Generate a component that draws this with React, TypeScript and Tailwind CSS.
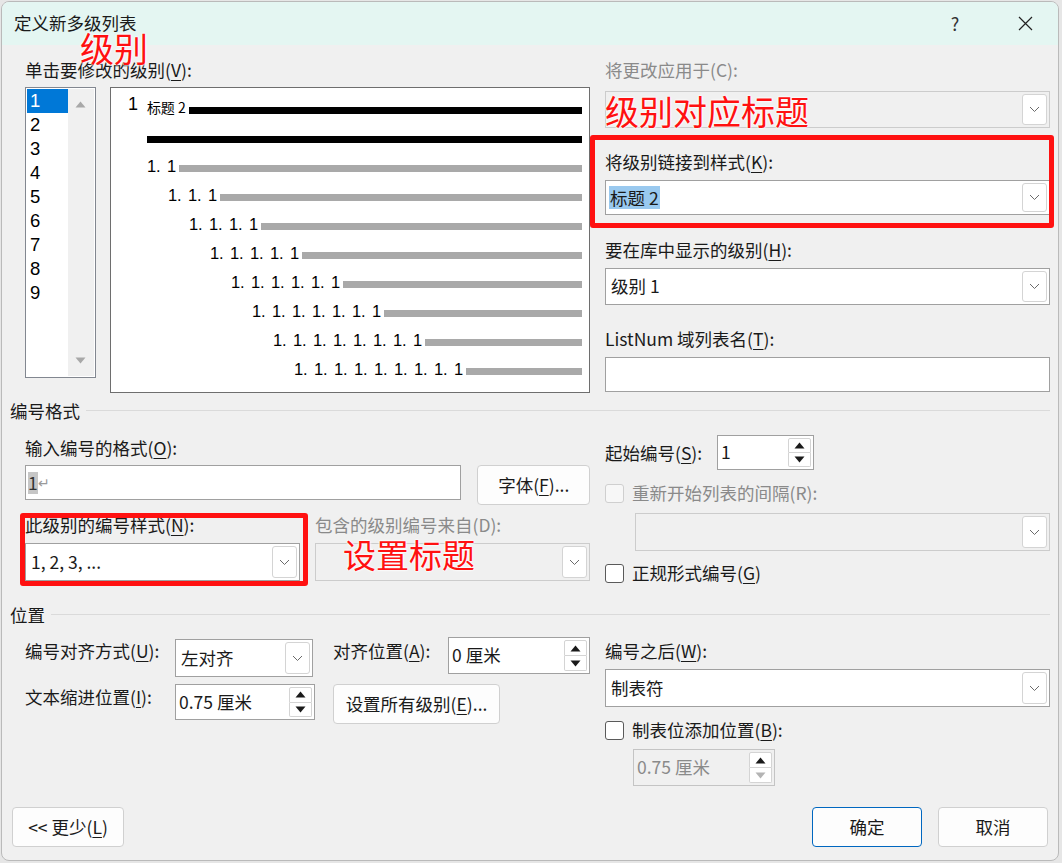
import { ReactNode } from 'react'

function Mn({ c }: { c: string }) {
  return <span className="underline decoration-1 underline-offset-[3px]">{c}</span>
}

function Label({ children, disabled, className = '' }: { children: ReactNode; disabled?: boolean; className?: string }) {
  return (
    <div className={`h-[24px] leading-[24px] text-[17.5px] whitespace-nowrap ${disabled ? 'text-[#8a8a8a]' : 'text-[#1a1a1a]'} ${className}`}>
      {children}
    </div>
  )
}

function Chevron() {
  return (
    <svg width="11" height="7" viewBox="0 0 11 7">
      <path d="M1 1l4.5 4.5L10 1" fill="none" stroke="#6a6a6a" strokeWidth="1" />
    </svg>
  )
}

function Triangle({ up, color }: { up?: boolean; color: string }) {
  return (
    <svg width="11" height="7" viewBox="0 0 11 7">
      <path d={up ? 'M0.5 6.5L5.5 0.5L10.5 6.5Z' : 'M0.5 0.5L10.5 0.5L5.5 6.5Z'} fill={color} />
    </svg>
  )
}

function Select({ children, disabled, className = '' }: { children?: ReactNode; disabled?: boolean; className?: string }) {
  return (
    <div className={`flex border ${disabled ? 'border-[#cccccc] bg-[#f0f0f0]' : 'border-[#a0a0a0] bg-white'} ${className}`}>
      <div className="flex-1 flex items-center pl-[4px] text-[17.5px] text-[#1a1a1a] whitespace-nowrap">{children}</div>
      <div className="w-[25px] my-[2px] mr-[2px] border border-[#d4d4d4] rounded-[3px] bg-white flex items-center justify-center">
        <Chevron />
      </div>
    </div>
  )
}

function Spinner({ value, disabled, className = '' }: { value: string; disabled?: boolean; className?: string }) {
  return (
    <div className={`flex border ${disabled ? 'border-[#c4c4c4] bg-[#f0f0f0]' : 'border-[#a0a0a0] bg-white'} ${className}`}>
      <div className={`flex-1 flex items-center pl-[3px] text-[17.5px] whitespace-nowrap ${disabled ? 'text-[#8a8a8a]' : 'text-[#1a1a1a]'}`}>
        {value}
      </div>
      <div className="w-[23px] flex flex-col my-[2px] mr-[2px]">
        <div className="flex-1 border border-[#d4d4d4] rounded-t-[2px] bg-white flex items-center justify-center">
          <Triangle up color="#1a1a1a" />
        </div>
        <div className="flex-1 border border-t-0 border-[#d4d4d4] rounded-b-[2px] bg-white flex items-center justify-center">
          <Triangle color={disabled ? '#b4b4b4' : '#1a1a1a'} />
        </div>
      </div>
    </div>
  )
}

function Checkbox({ label, disabled }: { label: ReactNode; disabled?: boolean }) {
  return (
    <div className="flex items-center h-[24px]">
      <div
        className={`w-[19px] h-[19px] rounded-[3px] border ${disabled ? 'border-[#cfcfcf] bg-[#f7f7f7]' : 'border-[#5a5a5a] bg-white'}`}
      />
      <Label disabled={disabled} className="ml-[8px]">
        {label}
      </Label>
    </div>
  )
}

function Button({ children, className = '' }: { children: ReactNode; className?: string }) {
  return (
    <div
      className={`flex items-center justify-center rounded-[4px] border bg-[#fdfdfd] text-[17.5px] text-[#1a1a1a] whitespace-nowrap ${className}`}
    >
      {children}
    </div>
  )
}

function GroupHeader({ title }: { title: string }) {
  return (
    <div className="flex items-center h-[24px]">
      <span className="text-[17.5px] leading-[24px] text-[#1a1a1a]">{title}</span>
      <div className="flex-1 h-px bg-[#dadada] ml-[6px] -mt-[2px]" />
    </div>
  )
}

function Preview() {
  const levels = [2, 3, 4, 5, 6, 7, 8, 9]
  return (
    <div className="ml-[14px] w-[481px] h-[306px] border border-[#6e6e6e] bg-white pr-[7px] font-['Liberation_Sans',sans-serif] text-black">
      <div className="flex items-end h-[28px] pl-[17px]">
        <span className="w-[19px] text-[18px] leading-none mb-[3px]">1</span>
        <span className="text-[14px] leading-none mb-[2px] font-['Noto_Sans_CJK_SC',sans-serif]">标题 2</span>
        <div className="flex-1 h-[7px] bg-black ml-[3px] mb-[2px]" />
      </div>
      <div className="flex items-end h-[29px] pl-[36px]">
        <div className="flex-1 h-[7px] bg-black mb-[2px]" />
      </div>
      {levels.map((n, i) => (
        <div key={n} className="flex items-end h-[29px]" style={{ paddingLeft: 36 + i * 21 }}>
          <span className="flex text-[16.5px] leading-none">
            {Array.from({ length: n - 1 }).map((_, k) => (
              <span key={k} className="w-[20px]">
                1.
              </span>
            ))}
            <span>1</span>
          </span>
          <div className="flex-1 h-[7px] bg-[#a9a9a9] ml-[3px] mb-[2px]" />
        </div>
      ))}
    </div>
  )
}

function LevelList() {
  return (
    <div className="w-[71px] h-[291px] border border-[#828790] bg-white flex">
      <div className="w-[42px] pt-px pl-px flex flex-col font-['Liberation_Sans',sans-serif]">
        {[1, 2, 3, 4, 5, 6, 7, 8, 9].map((n) => (
          <div
            key={n}
            className={`h-[24px] leading-[24px] pl-[3px] text-[18.5px] ${n === 1 ? 'bg-[#0078d7] text-white' : 'text-black'}`}
          >
            {n}
          </div>
        ))}
      </div>
      <div className="flex-1 my-px mr-px bg-[#f0f0f0] flex flex-col items-center justify-between py-[12px]">
        <Triangle up color="#a8a8a8" />
        <Triangle color="#a8a8a8" />
      </div>
    </div>
  )
}

const red = 'text-[#ff1111] [text-shadow:0_0_2px_#fff,0_0_2px_#fff,0_0_3px_#fff]'

export default function App() {
  return (
    <div className="w-[1062px] h-[863px] bg-[#e6e6e6] pl-px pt-px font-['Noto_Sans_CJK_SC',sans-serif]">
      <div className="relative w-[1058px] h-[860px] border border-[#bababa] rounded-[8px] bg-[#f0f0f0] flex flex-col overflow-hidden">
        {/* title bar */}
        <div className="h-[43px] shrink-0 bg-[#e4f6f2] flex items-center pl-[12px] pr-[25px]">
          <span className="flex-1 text-[17.5px] text-[#1a1a1a]">定义新多级列表</span>
          <span className="w-[20px] text-center text-[18px] text-[#333]">?</span>
          <svg className="ml-[53px]" width="15" height="15" viewBox="0 0 15 15">
            <path d="M1 1L14 14M14 1L1 14" stroke="#222" strokeWidth="1.2" />
          </svg>
        </div>

        <div className="flex-1 flex flex-col pl-[8px] pr-[8px]">
          {/* top: levels + preview */}
          <div className="flex pl-[15px] pt-[13px]">
            <div className="w-[565px]">
              <Label>
                单击要修改的级别(<Mn c="V" />):
              </Label>
              <div className="flex mt-[5px]">
                <LevelList />
                <Preview />
              </div>
            </div>
            <div className="ml-[15px] w-[445px]">
              <Label disabled>将更改应用于(C):</Label>
              <Select disabled className="mt-[9px] h-[37px]" />
              <Label className="mt-[22px]">
                将级别链接到样式(<Mn c="K" />):
              </Label>
              <Select className="mt-[6px] h-[35px]">
                <span className="bg-[#99c9ef] -ml-[1px] px-px leading-[23px]">标题 2</span>
              </Select>
              <Label className="mt-[23px]">
                要在库中显示的级别(<Mn c="H" />):
              </Label>
              <Select className="mt-[6px] h-[37px]">
                <span className="pl-px">级别 1</span>
              </Select>
              <Label className="mt-[22px]">
                ListNum 域列表名(<Mn c="T" />):
              </Label>
              <div className="mt-[6px] h-[35px] border border-[#a0a0a0] bg-white" />
            </div>
          </div>

          {/* number format */}
          <div className="mt-[6px]">
            <GroupHeader title="编号格式" />
          </div>
          <div className="flex pl-[15px] mt-[13px]">
            <div className="w-[565px]">
              <Label>
                输入编号的格式(<Mn c="O" />):
              </Label>
              <div className="flex items-start mt-[5px]">
                <div className="w-[438px] h-[35px] border border-[#a0a0a0] bg-white flex items-center pl-[2px] text-[17.5px]">
                  <span className="bg-[#c6c6c6] text-[#333] leading-[22px]">1</span>
                  <span className="text-[#9a9a9a] text-[14px]">↵</span>
                </div>
                <Button className="ml-[16px] w-[113px] h-[40px] border-[#d0d0d0]">
                  字体(<Mn c="F" />)...
                </Button>
              </div>
              <div className="flex gap-[15px] mt-[8px]">
                <div className="w-[275px]">
                  <Label>
                    此级别的编号样式(<Mn c="N" />):
                  </Label>
                  <Select className="mt-[6px] h-[38px]">
                    <span className="pl-px">1, 2, 3, ...</span>
                  </Select>
                </div>
                <div className="w-[275px]">
                  <Label disabled>包含的级别编号来自(D):</Label>
                  <Select disabled className="mt-[6px] h-[38px]" />
                </div>
              </div>
            </div>
            <div className="ml-[15px] w-[445px] -mt-[1px]">
              <div className="flex items-center h-[35px]">
                <Label className="w-[112px]">
                  起始编号(<Mn c="S" />):
                </Label>
                <Spinner value="1" className="w-[97px] h-[35px]" />
              </div>
              <div className="mt-[11px]">
                <Checkbox disabled label="重新开始列表的间隔(R):" />
              </div>
              <Select disabled className="ml-[30px] mt-[8px] h-[38px]" />
              <div className="mt-[10px]">
                <Checkbox
                  label={
                    <>
                      正规形式编号(<Mn c="G" />)
                    </>
                  }
                />
              </div>
            </div>
          </div>

          {/* position */}
          <div className="mt-[18px]">
            <GroupHeader title="位置" />
          </div>
          <div className="flex pl-[15px] mt-[10px]">
            <div className="w-[565px]">
              <div className="flex items-start h-[40px]">
                <Label className="w-[150px] mt-[2px]">
                  编号对齐方式(<Mn c="U" />):
                </Label>
                <Select className="w-[138px] h-[38px] mt-[2px]">
                  <span className="pl-px">左对齐</span>
                </Select>
                <Label className="ml-[20px] w-[115px] mt-[2px]">
                  对齐位置(<Mn c="A" />):
                </Label>
                <Spinner value="0 厘米" className="w-[142px] h-[37px]" />
              </div>
              <div className="flex items-start mt-[7px]">
                <Label className="w-[150px] mt-[1px]">
                  文本缩进位置(<Mn c="I" />):
                </Label>
                <Spinner value="0.75 厘米" className="w-[140px] h-[36px]" />
                <Button className="ml-[18px] w-[167px] h-[40px] border-[#d0d0d0]">
                  设置所有级别(<Mn c="E" />)...
                </Button>
              </div>
            </div>
            <div className="ml-[15px] w-[445px]">
              <Label className="mt-[2px]">
                编号之后(<Mn c="W" />):
              </Label>
              <Select className="mt-[6px] h-[38px]">
                <span className="pl-px">制表符</span>
              </Select>
              <div className="mt-[11px]">
                <Checkbox
                  label={
                    <>
                      制表位添加位置(<Mn c="B" />):
                    </>
                  }
                />
              </div>
              <Spinner disabled value="0.75 厘米" className="ml-[28px] mt-[7px] w-[142px] h-[37px]" />
            </div>
          </div>

          {/* bottom buttons */}
          <div className="mt-auto pb-[13px] flex justify-between">
            <Button className="ml-[2px] w-[112px] h-[40px] border-[#d0d0d0]">
              &lt;&lt; 更少(<Mn c="L" />)
            </Button>
            <div className="flex gap-[16px] mr-[2px]">
              <Button className="w-[110px] h-[40px] border-[#0067c0]">确定</Button>
              <Button className="w-[110px] h-[40px] border-[#d0d0d0]">取消</Button>
            </div>
          </div>
        </div>

        {/* red annotations */}
        <div className={`absolute left-[78px] top-[29px] text-[34px] leading-none ${red}`}>级别</div>
        <div className={`absolute left-[603px] top-[92px] text-[34px] leading-none ${red}`}>级别对应标题</div>
        <div className={`absolute left-[341px] top-[536px] text-[33px] leading-none ${red}`}>设置标题</div>
        <div className="absolute left-[588px] top-[133px] w-[464px] h-[93px] border-[5px] border-[#ff1111] rounded-[3px]" />
        <div className="absolute left-[18px] top-[511px] w-[288px] h-[73px] border-[5px] border-[#ff1111] rounded-[3px]" />
      </div>
    </div>
  )
}
